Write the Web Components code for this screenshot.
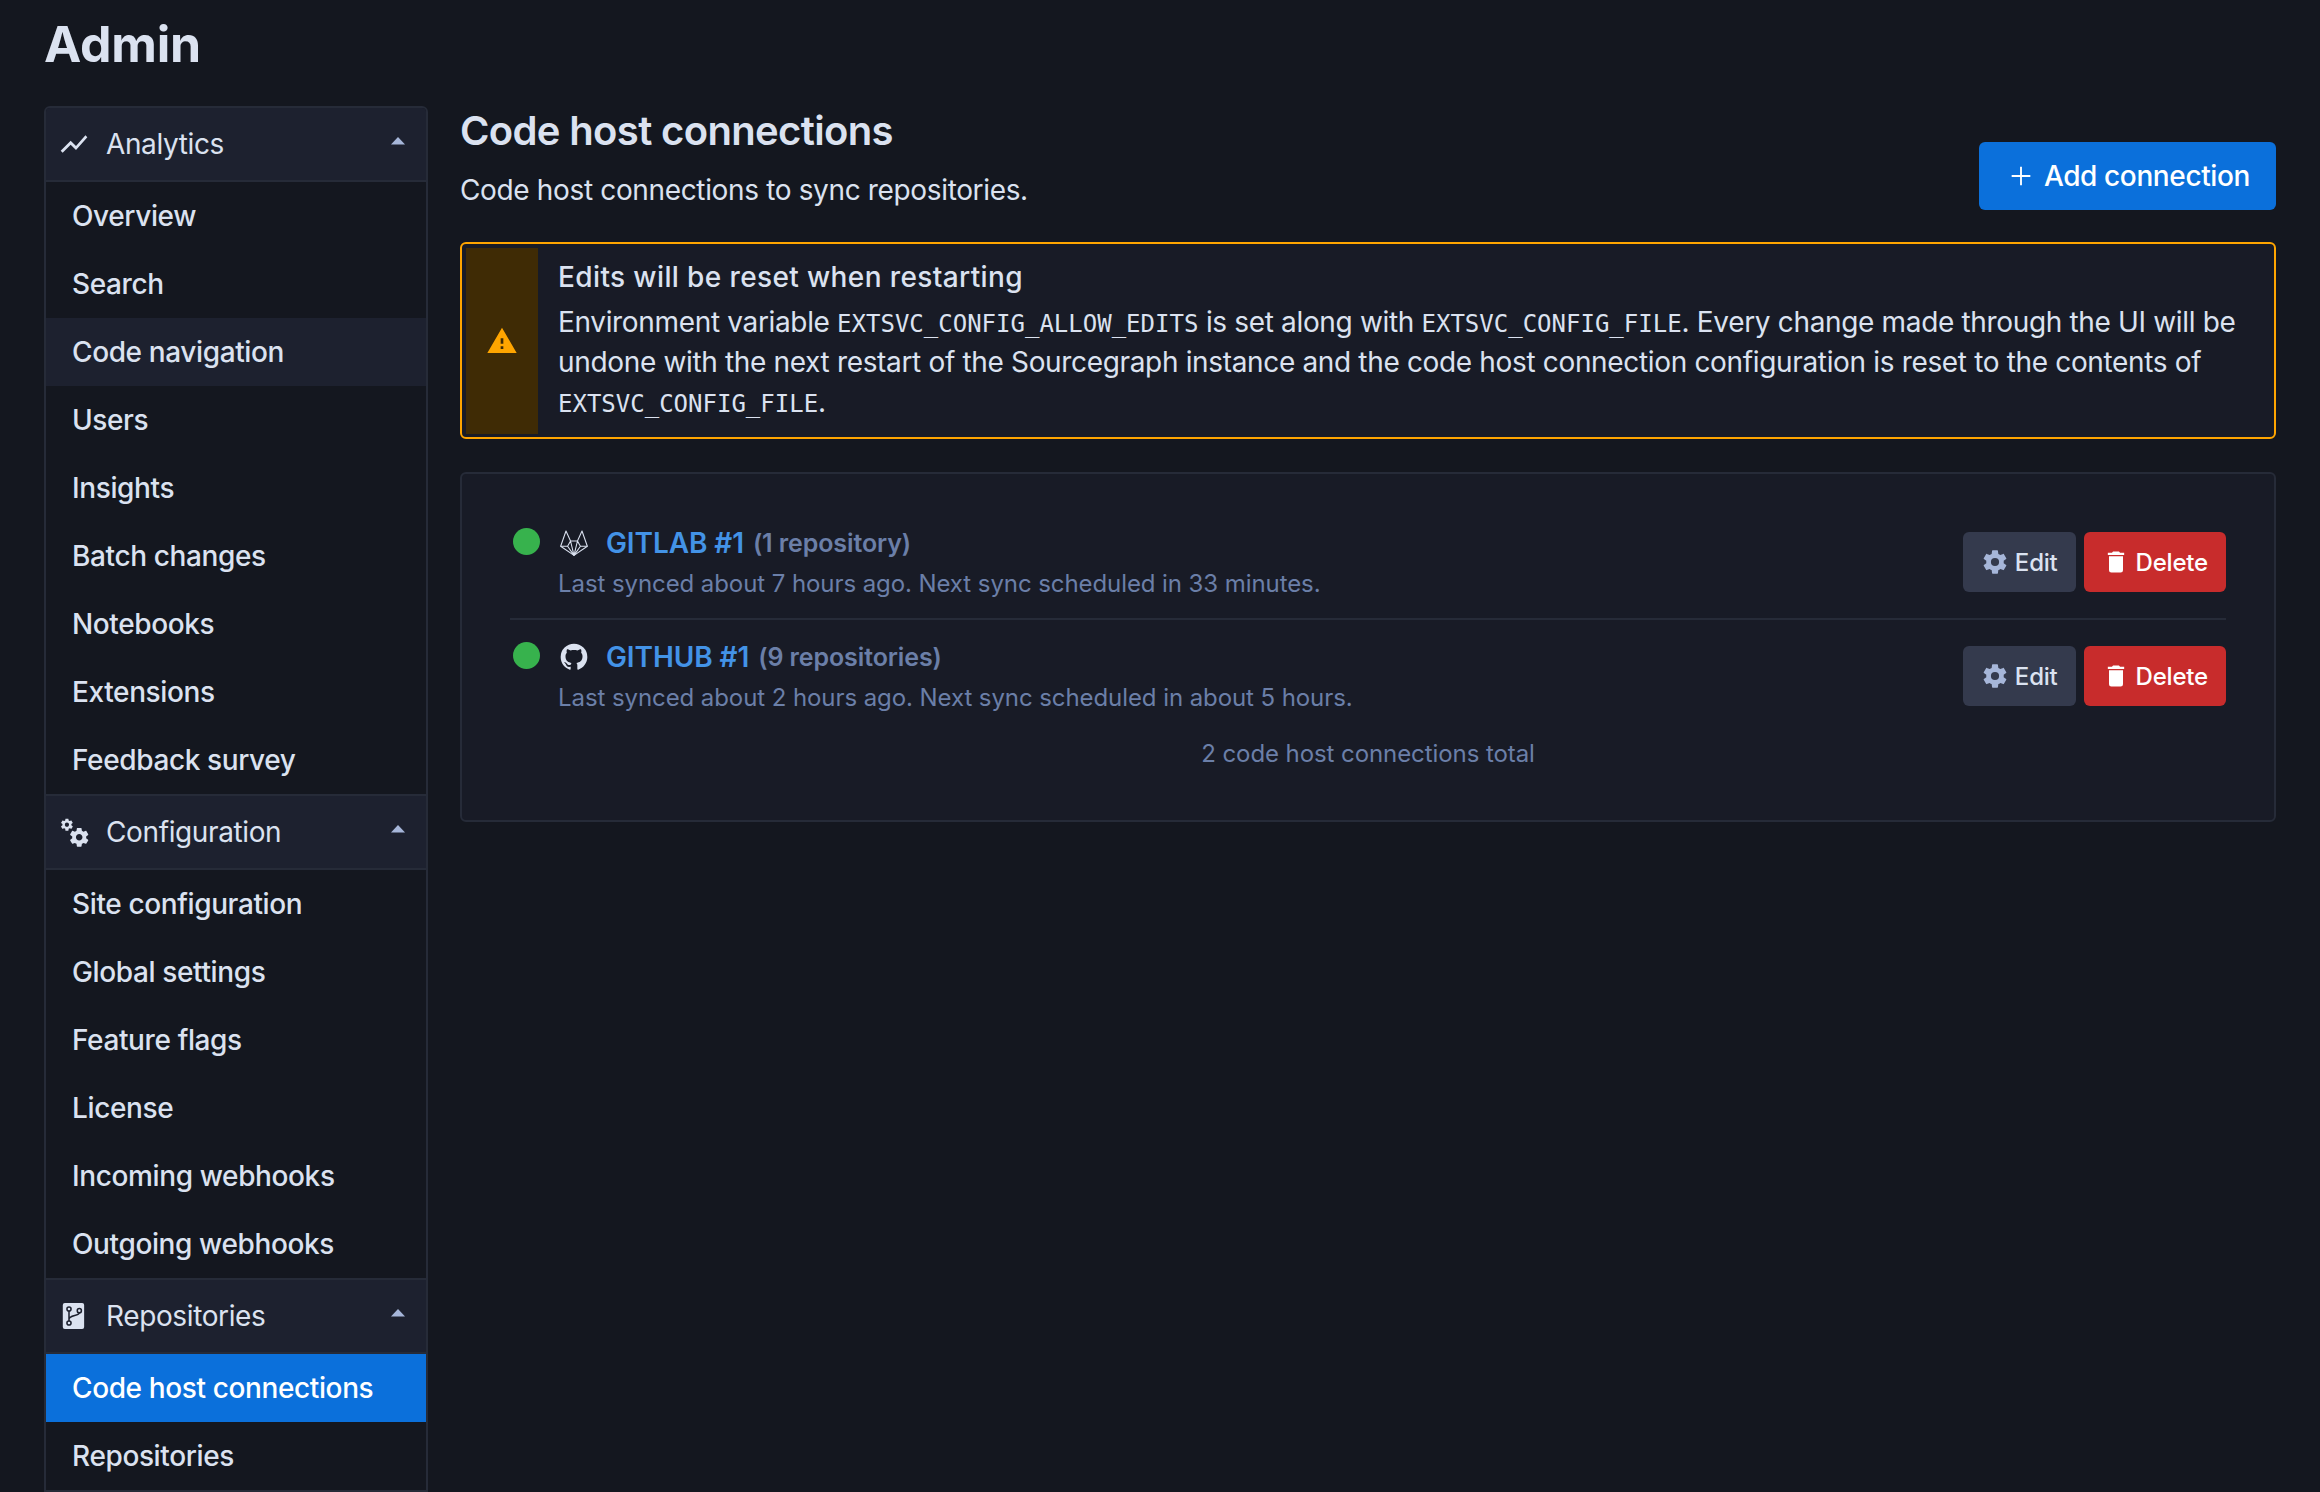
<!DOCTYPE html>
<html><head><meta charset="utf-8"><title>Admin</title>
<style>
html,body{margin:0;background:#14171f;height:1492px;overflow:hidden}
body{font:400 28px/40px Inter,"Liberation Sans",sans-serif;color:#dbe2f0;letter-spacing:-.38px}
</style></head><body>
<admin-page>
  <admin-sidebar slot="side">
    <nav-group label="Analytics" icon="chart">
      <nav-item>Overview</nav-item><nav-item>Search</nav-item><nav-item state="hover">Code navigation</nav-item>
      <nav-item>Users</nav-item><nav-item>Insights</nav-item><nav-item>Batch changes</nav-item>
      <nav-item>Notebooks</nav-item><nav-item>Extensions</nav-item><nav-item>Feedback survey</nav-item>
    </nav-group>
    <nav-group label="Configuration" icon="cogs">
      <nav-item>Site configuration</nav-item><nav-item>Global settings</nav-item><nav-item>Feature flags</nav-item>
      <nav-item>License</nav-item><nav-item>Incoming webhooks</nav-item><nav-item>Outgoing webhooks</nav-item>
    </nav-group>
    <nav-group label="Repositories" icon="repo">
      <nav-item state="active">Code host connections</nav-item><nav-item>Repositories</nav-item>
    </nav-group>
  </admin-sidebar>
  <page-header slot="main"></page-header>
  <warn-alert slot="main" heading="Edits will be reset when restarting">Environment variable <code>EXTSVC_CONFIG_ALLOW_EDITS</code> is set along with <code>EXTSVC_CONFIG_FILE</code>. Every change made through the UI will be undone with the next restart of the Sourcegraph instance and the code host connection configuration is reset to the contents of <code>EXTSVC_CONFIG_FILE</code>.</warn-alert>
  <connection-list slot="main" total="2 code host connections total">
    <connection-row kind="gitlab" name="GITLAB #1" count="(1 repository)" sync="Last synced about 7 hours ago. Next sync scheduled in 33 minutes."></connection-row>
    <connection-row kind="github" name="GITHUB #1" count="(9 repositories)" sync="Last synced about 2 hours ago. Next sync scheduled in about 5 hours."></connection-row>
  </connection-list>
</admin-page>
<script>
const P={
 chart:'<path fill="currentColor" d="M3.5 18.49l6-6.01 4 4L22 6.92l-1.41-1.41-7.09 7.97-4-4L2 16.99z"/>',
 cogs:'<path fill="currentColor" d="M15.9,18.45C17.25,18.45 18.35,17.35 18.35,16C18.35,14.65 17.25,13.55 15.9,13.55C14.54,13.55 13.45,14.65 13.45,16C13.45,17.35 14.54,18.45 15.9,18.45M21.1,16.68L22.58,17.84C22.71,17.95 22.75,18.13 22.66,18.29L21.26,20.71C21.17,20.86 21,20.92 20.83,20.86L19.09,20.16C18.73,20.44 18.34,20.67 17.92,20.85L17.65,22.7C17.62,22.87 17.47,23 17.3,23H14.5C14.32,23 14.18,22.87 14.15,22.7L13.89,20.85C13.46,20.67 13.07,20.44 12.71,20.16L10.96,20.86C10.81,20.92 10.62,20.86 10.54,20.71L9.14,18.29C9.05,18.13 9.09,17.95 9.22,17.84L10.7,16.68L10.65,16L10.7,15.31L9.22,14.16C9.09,14.05 9.05,13.86 9.14,13.71L10.54,11.29C10.62,11.13 10.81,11.07 10.96,11.13L12.71,11.84C13.07,11.56 13.46,11.32 13.89,11.15L14.15,9.29C14.18,9.13 14.32,9 14.5,9H17.3C17.47,9 17.62,9.13 17.65,9.29L17.92,11.15C18.34,11.32 18.73,11.56 19.09,11.84L20.83,11.13C21,11.07 21.17,11.13 21.26,11.29L22.66,13.71C22.75,13.86 22.71,14.05 22.58,14.16L21.1,15.31L21.15,16L21.1,16.68M6.69,8.07C7.56,8.07 8.26,7.37 8.26,6.5C8.26,5.63 7.56,4.92 6.69,4.92A1.58,1.58 0 0,0 5.11,6.5C5.11,7.37 5.82,8.07 6.69,8.07M10.03,6.94L11,7.68C11.07,7.75 11.09,7.87 11.03,7.97L10.13,9.53C10.08,9.63 9.96,9.67 9.86,9.63L8.74,9.18L8,9.62L7.81,10.81C7.79,10.92 7.7,11 7.59,11H5.79C5.67,11 5.58,10.92 5.56,10.81L5.4,9.62L4.64,9.18L3.5,9.63C3.41,9.67 3.3,9.63 3.24,9.53L2.34,7.97C2.28,7.87 2.31,7.75 2.39,7.68L3.34,6.94L3.31,6.5L3.34,6.06L2.39,5.32C2.31,5.25 2.28,5.13 2.34,5.03L3.24,3.47C3.3,3.37 3.41,3.33 3.5,3.37L4.63,3.82L5.4,3.38L5.56,2.19C5.58,2.08 5.67,2 5.79,2H7.59C7.7,2 7.79,2.08 7.81,2.19L8,3.38L8.74,3.82L9.86,3.37C9.96,3.33 10.08,3.37 10.13,3.47L11.03,5.03C11.09,5.13 11.07,5.25 11,5.32L10.03,6.06L10.06,6.5L10.03,6.94Z"/>',
 repo:'<rect x="3.6" y="2.25" width="16" height="19.5" rx="1.5" fill="currentColor"/><g fill="none" stroke="#1d212f" stroke-width="1.15"><circle cx="8.25" cy="6.75" r="1.55"/><circle cx="8.25" cy="17.25" r="1.55"/><circle cx="16" cy="8" r="1.55"/><path d="M8.25 8.3V15.7M16 9.55C16 12.2 8.25 11 8.25 14.5"/></g>',
 cog:'<path fill="currentColor" d="M12,15.5A3.5,3.5 0 0,1 8.5,12A3.5,3.5 0 0,1 12,8.5A3.5,3.5 0 0,1 15.5,12A3.5,3.5 0 0,1 12,15.5M19.43,12.97C19.47,12.65 19.5,12.33 19.5,12C19.5,11.67 19.47,11.34 19.43,11L21.54,9.37C21.73,9.22 21.78,8.95 21.66,8.73L19.66,5.27C19.54,5.05 19.27,4.96 19.05,5.05L16.56,6.05C16.04,5.66 15.5,5.32 14.87,5.07L14.5,2.42C14.46,2.18 14.25,2 14,2H10C9.75,2 9.54,2.18 9.5,2.42L9.13,5.07C8.5,5.32 7.96,5.66 7.44,6.05L4.95,5.05C4.73,4.96 4.46,5.05 4.34,5.27L2.34,8.73C2.21,8.95 2.27,9.22 2.46,9.37L4.57,11C4.53,11.34 4.5,11.67 4.5,12C4.5,12.33 4.53,12.65 4.57,12.97L2.46,14.63C2.27,14.78 2.21,15.05 2.34,15.27L4.34,18.73C4.46,18.95 4.73,19.03 4.95,18.95L7.44,17.94C7.96,18.34 8.5,18.68 9.13,18.93L9.5,21.58C9.54,21.82 9.75,22 10,22H14C14.25,22 14.46,21.82 14.5,21.58L14.87,18.93C15.5,18.67 16.04,18.34 16.56,17.94L19.05,18.95C19.27,19.03 19.54,18.95 19.66,18.73L21.66,15.27C21.78,15.05 21.73,14.78 21.54,14.63L19.43,12.97Z"/>',
 trash:'<path fill="currentColor" d="M19,4H15.5L14.5,3H9.5L8.5,4H5V6H19M6,19A2,2 0 0,0 8,21H16A2,2 0 0,0 18,19V7H6V19Z"/>',
 plus:'<path fill="currentColor" d="M19 12.7h-6.3V19h-1.4v-6.3H5v-1.4h6.3V5h1.4v6.3H19z"/>',
 alert:'<path fill="currentColor" d="M13 14H11V10H13M13 18H11V16H13M1 21H23L12 2L1 21Z"/>',
 github:'<path fill="currentColor" d="M12,2A10,10 0 0,0 2,12C2,16.42 4.87,20.17 8.84,21.5C9.34,21.58 9.5,21.27 9.5,21C9.5,20.77 9.5,20.14 9.5,19.31C6.73,19.91 6.14,17.97 6.14,17.97C5.68,16.81 5.03,16.5 5.03,16.5C4.12,15.88 5.1,15.9 5.1,15.9C6.1,15.97 6.63,16.93 6.63,16.93C7.5,18.45 8.97,18 9.54,17.76C9.63,17.11 9.89,16.67 10.17,16.42C7.95,16.17 5.62,15.31 5.62,11.5C5.62,10.39 6,9.5 6.65,8.79C6.55,8.54 6.2,7.5 6.75,6.15C6.75,6.15 7.59,5.88 9.5,7.17C10.29,6.95 11.15,6.84 12,6.84C12.85,6.84 13.71,6.95 14.5,7.17C16.41,5.88 17.25,6.15 17.25,6.15C17.8,7.5 17.45,8.54 17.35,8.79C18,9.5 18.38,10.39 18.38,11.5C18.38,15.32 16.04,16.16 13.81,16.41C14.17,16.72 14.5,17.33 14.5,18.26C14.5,19.6 14.5,20.68 14.5,21C14.5,21.27 14.66,21.59 15.17,21.5C19.14,20.16 22,16.42 22,12A10,10 0 0,0 12,2Z"/>',
 gitlab:'<g fill="none" stroke="currentColor" stroke-width=".8" stroke-linejoin="round"><path d="M12 21.3L2 14.4 6 3 9.4 10.5H14.6L18 3 22 14.4Z"/><path d="M2 14.4H7.2L12 21.3 16.8 14.4H22M9.4 10.5L7.2 14.4M14.6 10.5L16.8 14.4M9.4 10.5L12 21.3 14.6 10.5"/></g>'
};
const icon=(n,s,st='')=>`<svg viewBox="0 0 24 24" width="${s}" height="${s}" style="flex:none;display:block;${st}" aria-hidden="true">${P[n]}</svg>`;
function el(tag,html){customElements.define(tag,class extends HTMLElement{
  constructor(){super();this.attachShadow({mode:'open'})}
  connectedCallback(){const a=n=>this.getAttribute(n)||'';this.shadowRoot.innerHTML=html(a)}
})}
el('admin-page',()=>`<style>
:host{display:block;padding:0 44px}
h1{margin:0;font:700 50px/60px Inter,"Liberation Sans",sans-serif;letter-spacing:-.2px;color:#dbe2f0;padding:14px 0 32px;height:60px}
.g{display:grid;grid-template-columns:384px 1fr;column-gap:32px}
.m{display:flex;flex-direction:column;min-width:0}
</style><h1>Admin</h1><div class="g"><div><slot name="side"></slot></div><div class="m"><slot name="main"></slot></div></div>`);
el('admin-sidebar',()=>`<style>:host{display:block;border:2px solid #262b38;border-radius:6px 6px 0 0;overflow:hidden}</style><slot></slot>`);
el('nav-group',a=>`<style>
:host{display:block}
.h{display:flex;align-items:center;height:72px;background:#1d212f;border-bottom:2px solid #262b38;padding:0 21px 0 12px;color:#dbe2f0}
:host(:not(:first-child)) .h{border-top:2px solid #262b38}
.l{margin-left:16px;flex:1;font-weight:400}
.c{width:14px;height:8px;margin-top:-6px}
</style><div class="h">${icon(a('icon'),32)}<span class="l">${a('label')}</span><svg class="c" viewBox="0 0 14 8"><path d="M7 0L14 7.5H0Z" fill="#a6b6d9"/></svg></div><slot></slot>`);
el('nav-item',a=>`<style>
:host{display:block;height:68px;box-sizing:border-box;padding:14px 26px;font-weight:500;color:#dbe2f0}
:host([state=hover]){background:#1d212f}
:host([state=active]){background:#0b70db;color:#fff}
</style><slot></slot>`);
el('page-header',()=>`<style>
:host{display:flex;justify-content:space-between;align-items:flex-end;height:104px;margin-bottom:32px}
h2{margin:0 0 15px;font:600 40px/48px Inter,"Liberation Sans",sans-serif;letter-spacing:-.65px;color:#dbe2f0}
p{margin:0;letter-spacing:-.35px}
</style><div><h2>Code host connections</h2><p>Code host connections to sync repositories.</p></div><ui-button kind="primary" icon="plus" big>Add connection</ui-button>`);
el('ui-button',a=>`<style>
:host{display:inline-flex;align-items:center;box-sizing:border-box;border-radius:6px;font-weight:500;white-space:nowrap;height:60px;padding:0 18px;font-size:24px;gap:6px;letter-spacing:-.2px}
:host([big]){height:68px;padding:0 26px;font-size:28px;gap:6.5px;letter-spacing:-.38px}
:host([kind=primary]){background:#0b70db;color:#fff}
:host([kind=danger]){background:#c82c2c;color:#fff}
:host([kind=secondary]){background:#343a4d;color:#dbe2f0}
:host([kind=secondary]) svg{color:#a6b6d9}
span{display:block;padding-top:1px}
:host([big]) span{padding-top:0}
</style>${icon(a('icon'),a('kind')=='primary'?32:28)}<span><slot></slot></span>`);
el('warn-alert',a=>`<style>
:host{display:flex;box-sizing:border-box;height:197px;border:2px solid #ffa500;border-radius:6px;background:#181b26;padding:4px 30px 3px 4px;margin-bottom:33px}
.i{width:72px;flex:none;background:#3f2b05;color:#ffa500;display:flex;align-items:center;justify-content:center}
.t{margin:9px 0 0 20px;min-width:0;letter-spacing:-.34px}
b{display:block;font-weight:500;margin-bottom:5px;letter-spacing:.38px}
::slotted(code){font:24px/1 "DejaVu Sans Mono",monospace;letter-spacing:0}
</style><div class="i">${icon('alert',32)}</div><div class="t"><b>${a('heading')}</b><slot></slot></div>`);
el('connection-list',a=>`<style>
:host{display:block;box-sizing:border-box;border:2px solid #262b38;border-radius:6px;background:#181b26;padding:31px 48px 46px;height:350px}
p{margin:1px 0 0;text-align:center;font-size:24px;letter-spacing:-.08px;color:#6b7fa8}
::slotted(connection-row:not(:last-of-type)){border-bottom:2px solid #262b38;height:95px}
::slotted(connection-row:last-of-type){padding-top:17px}
</style><slot></slot><p>${a('total')}</p>`);
el('connection-row',a=>`<style>
:host{display:flex;justify-content:space-between;box-sizing:content-box;height:96px;padding-top:18px}
.d{width:27px;height:27px;border-radius:50%;background:#37b24d;margin:5px 18px 0 3px;flex:none}
.n{display:flex;align-items:center;height:40px;white-space:nowrap}
.n svg{margin-right:16px;color:#dbe2f0}
.n a{color:#4393e7;font-weight:600;font-size:28px;letter-spacing:-.1px}
.n span{color:#6b7fa8;font-weight:600;font-size:25px;letter-spacing:-.1px;margin-left:9px}
.s{font-size:24px;letter-spacing:-.08px;color:#6b7fa8;line-height:40px;margin-top:1px}
.l{display:flex}
.b{display:flex;gap:8px;margin-top:9px;align-items:flex-start}
</style><div class="l"><div class="d"></div><div><div class="n">${icon(a('kind'),32)}<a>${a('name')}</a><span>${a('count')}</span></div><div class="s">${a('sync')}</div></div></div>
<div class="b"><ui-button kind="secondary" icon="cog">Edit</ui-button><ui-button kind="danger" icon="trash">Delete</ui-button></div>`);
</script>
</body></html>
